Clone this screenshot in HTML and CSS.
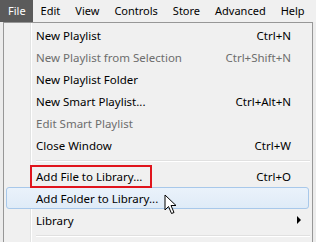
FILE: index.html
```html
<!DOCTYPE html>
<html lang="en">
<head>
    <meta charset="UTF-8">
    <title>iTunes File Menu</title>
    <link rel="stylesheet" href="styles.css">
</head>
<body>
    <div class="menubar">
        <span class="top active">File</span>
        <span class="top">Edit</span>
        <span class="top">View</span>
        <span class="top">Controls</span>
        <span class="top">Store</span>
        <span class="top">Advanced</span>
        <span class="top">Help</span>
    </div>

    <div class="dropdown">
        <div class="item"><span class="label">New Playlist</span><span class="key">Ctrl+N</span></div>
        <div class="item off"><span class="label">New Playlist from Selection</span><span class="key">Ctrl+Shift+N</span></div>
        <div class="item"><span class="label">New Playlist Folder</span></div>
        <div class="item"><span class="label">New Smart Playlist...</span><span class="key">Ctrl+Alt+N</span></div>
        <div class="item off"><span class="label">Edit Smart Playlist</span></div>
        <div class="item"><span class="label">Close Window</span><span class="key">Ctrl+W</span></div>
        <div class="sep"></div>
        <div class="item"><span class="label boxed">Add File to Library...</span><span class="key">Ctrl+O</span></div>
        <div class="item hover"><span class="label">Add Folder to Library...</span></div>
        <div class="item"><span class="label">Library</span><span class="arrow"></span></div>
        <div class="sep"></div>
        <div class="item"><span class="label">Home Sharing</span></div>

        <svg class="cursor" width="14" height="22" viewBox="0 0 14 22">
            <path d="M1 1 L1 16 L4.5 12.5 L7.5 19.5 L10 18.5 L7 11.5 L12 11.5 Z" fill="#fff" stroke="#000" stroke-width="1" stroke-linejoin="miter"/>
        </svg>
    </div>
</body>
</html>
```

FILE: styles.css
```css
body {
    margin: 0;
    background: #ececec;
    font-family: "Noto Sans", "Open Sans", Arial, sans-serif;
    font-size: 11.5px;
    color: #000;
    overflow: hidden;
}
.menubar {
    display: flex;
    height: 22px;
    background: #f0f0f0;
    font-size: 11px;
}
.top {
    padding: 0 7px 0 8px;
    line-height: 21px;
}
.top.active {
    background: #5b5b5b;
    color: #fff;
}
.dropdown {
    position: relative;
    margin-left: 3px;
    width: 306px;
    border: 1px solid #979797;
    padding: 1px 0 0 2px;
    background: #f0f0f0 linear-gradient(to right, transparent 26px, #e2e3e3 26px, #e2e3e3 27px, #fff 27px, #fff 28px, transparent 28px);
    height: 240px;
}
.item {
    display: flex;
    align-items: center;
    height: 22px;
    padding: 0 18px 0 30px;
    box-sizing: border-box;
    width: 303px;
}
.item .label {
    flex: 1;
}
.item.off {
    color: #6d6d6d;
}
.item.hover {
    background: linear-gradient(#eaf2fb, #dfebf7);
    border: 1px solid #a8c8ea;
    border-radius: 3px;
    padding-left: 29px;
}
.boxed {
    flex: none !important;
    margin-left: -6px;
    margin-right: auto;
    padding: 2px 8px 2px 4px;
    border: 2px solid #e0141c;
}
.sep {
    height: 9px;
    margin-left: 30px;
    margin-right: 2px;
    background: linear-gradient(transparent 4px, #e0e0e0 4px, #e0e0e0 5px, #fff 5px, #fff 6px, transparent 6px);
}
.arrow {
    width: 0;
    height: 0;
    border-left: 4px solid #000;
    border-top: 4px solid transparent;
    border-bottom: 4px solid transparent;
    margin-right: -10px;
}
.cursor {
    position: absolute;
    left: 160px;
    top: 171px;
}
```
